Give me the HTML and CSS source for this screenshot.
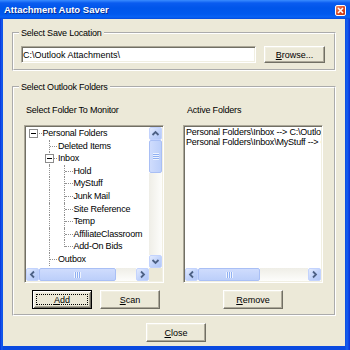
FILE: index.html
```
<!DOCTYPE html>
<html lang="en">
  <head>
    <meta charset="UTF-8" />
    <title>Attachment Auto Saver</title>
    <link rel="stylesheet" href="styles.css">
  </head>
  <body>
    <div class="window">
      <div class="titlebar">
        <span class="title">Attachment Auto Saver</span>
        <span class="close-x">
          <svg width="9" height="9" viewBox="0 0 9 9">
            <path d="M2 2 L7 7 M7 2 L2 7" stroke="#fff" stroke-width="1.6" />
          </svg>
        </span>
      </div>

      <div class="client">
        <fieldset class="group group-save">
          <legend>Select Save Location</legend>
          <div class="save-row">
            <input class="textbox" type="text" value="C:\Outlook Attachments\" />
            <button class="btn btn-browse"><u>B</u>rowse...</button>
          </div>
        </fieldset>

        <fieldset class="group group-folders">
          <legend>Select Outlook Folders</legend>
          <div class="folder-cols">
            <div class="col">
              <div class="col-label">Select Folder To Monitor</div>
              <div class="sunken list-box">
                <div class="tree">
                  <div class="row"><span class="c root"><span class="box"><i></i></span></span><span class="label">Personal Folders</span></div>
                  <div class="row"><span class="c"></span><span class="c tee"></span><span class="label">Deleted Items</span></div>
                  <div class="row"><span class="c"></span><span class="c tee"><span class="box"><i></i></span></span><span class="label">Inbox</span></div>
                  <div class="row"><span class="c"></span><span class="c pipe"></span><span class="c tee"></span><span class="label">Hold</span></div>
                  <div class="row"><span class="c"></span><span class="c pipe"></span><span class="c tee"></span><span class="label">MyStuff</span></div>
                  <div class="row"><span class="c"></span><span class="c pipe"></span><span class="c tee"></span><span class="label">Junk Mail</span></div>
                  <div class="row"><span class="c"></span><span class="c pipe"></span><span class="c tee"></span><span class="label">Site Reference</span></div>
                  <div class="row"><span class="c"></span><span class="c pipe"></span><span class="c tee"></span><span class="label">Temp</span></div>
                  <div class="row"><span class="c"></span><span class="c pipe"></span><span class="c tee"></span><span class="label">AffiliateClassroom</span></div>
                  <div class="row"><span class="c"></span><span class="c pipe"></span><span class="c elbow"></span><span class="label">Add-On Bids</span></div>
                  <div class="row"><span class="c"></span><span class="c tee"></span><span class="label">Outbox</span></div>
                </div>

                <div class="vscroll">
                  <span class="sb-btn">
                    <svg width="11" height="11" viewBox="0 0 11 11"><polyline points="2.5,7 5.5,4 8.5,7" fill="none" stroke="#4d6185" stroke-width="1.8" /></svg>
                  </span>
                  <span class="thumb thumb-v"><span class="grip"></span></span>
                  <span class="track track-v"></span>
                  <span class="sb-btn">
                    <svg width="11" height="11" viewBox="0 0 11 11"><polyline points="2.5,4 5.5,7 8.5,4" fill="none" stroke="#4d6185" stroke-width="1.8" /></svg>
                  </span>
                </div>

                <div class="hscroll">
                  <span class="sb-btn">
                    <svg width="11" height="11" viewBox="0 0 11 11"><polyline points="7,2.5 4,5.5 7,8.5" fill="none" stroke="#4d6185" stroke-width="1.8" /></svg>
                  </span>
                  <span class="thumb thumb-h tree-thumb"><span class="grip grip-h"></span></span>
                  <span class="track track-h"></span>
                  <span class="sb-btn">
                    <svg width="11" height="11" viewBox="0 0 11 11"><polyline points="4,2.5 7,5.5 4,8.5" fill="none" stroke="#4d6185" stroke-width="1.8" /></svg>
                  </span>
                </div>
                <div class="corner"></div>
              </div>
              <div class="btn-row btn-row-left">
                <button class="btn default"><span class="focus"><u>A</u>dd</span></button>
                <button class="btn"><u>S</u>can</button>
              </div>
            </div>

            <div class="col">
              <div class="col-label col-label-right">Active Folders</div>
              <div class="sunken list-box list-box-active">
                <div class="active-list">
                  <div class="item">Personal Folders\Inbox --&gt; C:\Outlook Attachments\Inbox\</div>
                  <div class="item">Personal Folders\Inbox\MyStuff --&gt; C:\Outlook Attachments\MyStuff\</div>
                </div>
                <div class="hscroll hscroll-wide">
                  <span class="sb-btn">
                    <svg width="11" height="11" viewBox="0 0 11 11"><polyline points="7,2.5 4,5.5 7,8.5" fill="none" stroke="#4d6185" stroke-width="1.8" /></svg>
                  </span>
                  <span class="thumb thumb-h active-thumb"><span class="grip grip-h"></span></span>
                  <span class="track track-h"></span>
                  <span class="sb-btn">
                    <svg width="11" height="11" viewBox="0 0 11 11"><polyline points="4,2.5 7,5.5 4,8.5" fill="none" stroke="#4d6185" stroke-width="1.8" /></svg>
                  </span>
                </div>
              </div>
              <div class="btn-row btn-row-center">
                <button class="btn"><u>R</u>emove</button>
              </div>
            </div>
          </div>
        </fieldset>

        <div class="footer">
          <button class="btn"><u>C</u>lose</button>
        </div>
      </div>
    </div>
  </body>
</html>
```

FILE: styles.css
```
* {
  box-sizing: border-box;
  margin: 0;
  padding: 0;
}

html,
body {
  width: 350px;
  height: 350px;
  overflow: hidden;
  font-family: "Liberation Sans", Arial, sans-serif;
  font-size: 9px;
  letter-spacing: -0.2px;
  color: #000;
}

.window {
  width: 350px;
  height: 350px;
  display: flex;
  flex-direction: column;
  background: linear-gradient(to right, #0831d9 0, #1660f0 2px, #0a4ae0 3px, #0a4ae0 345px, #1660f0 347px, #0831d9 350px);
}

.titlebar {
  height: 19px;
  flex: none;
  display: flex;
  align-items: center;
  padding: 0 4px 0 4px;
  background: linear-gradient(#3a8cff 0, #0a5cf0 3px, #0055ea 8px, #0058ee 14px, #0862f5 17px, #0449dc 19px);
}

.title {
  color: #fff;
  font-weight: bold;
  font-size: 9.5px;
  letter-spacing: 0;
  text-shadow: 1px 1px 0 #0b2a8c;
}

.close-x {
  margin-left: auto;
  margin-top: 1px;
  width: 11px;
  height: 11px;
  display: flex;
  align-items: center;
  justify-content: center;
  border: 1px solid #fff;
  border-radius: 2px;
  background: linear-gradient(135deg, #ec8a6a, #d8431c 60%, #c43a14);
}

.client {
  flex: 1;
  margin: 0 5px 4px 3px;
  background: #ece9d8;
  display: flex;
  flex-direction: column;
}

/* group boxes */

.group {
  min-width: 0;
  margin: 0 9px;
  border: 2px groove #fff;
}

.group legend {
  margin-left: 5px;
  padding: 0 2px;
  line-height: 10px;
}

.group-save {
  margin-top: 9px;
}

.group-folders {
  margin-top: 11px;
}

.save-row {
  display: flex;
  gap: 8px;
  padding: 8px 9px 6px 7px;
}

.textbox {
  width: 235px;
  height: 17px;
  padding: 0 1px;
  font: inherit;
  background: #fff;
  border: 1px solid;
  border-color: #aca899 #fff #fff #aca899;
  box-shadow: inset 1px 1px #716f64, inset -1px -1px #f1efe2;
  outline: none;
}

/* buttons */

.btn {
  font: inherit;
  color: #000;
  width: 60px;
  height: 19px;
  background: #ece9d8;
  border: 1px solid;
  border-color: #fff #716f64 #716f64 #fff;
  box-shadow: inset -1px -1px #aca899, inset 1px 1px #f1efe2;
  display: flex;
  align-items: center;
  justify-content: center;
}

.btn-browse {
  width: 61px;
  height: 17px;
}

.btn.default {
  border-color: #000;
  box-shadow: inset 1px 1px #fff, inset -1px -1px #716f64, inset 2px 2px #f1efe2, inset -2px -2px #aca899;
  padding: 2px;
}

.focus {
  flex: 1;
  align-self: stretch;
  margin: 1px;
  border: 1px dotted #000;
  display: flex;
  align-items: center;
  justify-content: center;
}

/* folder columns */

.folder-cols {
  display: flex;
  gap: 19px;
  padding: 13px 11px 5px 10px;
}

.col {
  width: 140px;
  display: flex;
  flex-direction: column;
}

.col-label {
  line-height: 10px;
  padding-left: 2px;
  margin-bottom: 10px;
}

.col-label-right {
  padding-left: 4px;
}

.sunken {
  border: 1px solid;
  border-color: #aca899 #fff #fff #aca899;
  padding: 1px;
  box-shadow: inset 1px 1px #716f64, inset -1px -1px #f1efe2;
  background: #fff;
}

.list-box {
  height: 158px;
  display: grid;
  grid-template-columns: 1fr 13px;
  grid-template-rows: 1fr 13px;
  overflow: hidden;
}

.list-box-active {
  grid-template-columns: 1fr;
}

.btn-row {
  display: flex;
  gap: 8px;
  margin-top: 7px;
}

.btn-row-left {
  padding-left: 8px;
}

.btn-row-center {
  justify-content: center;
}

.footer {
  display: flex;
  justify-content: center;
  padding-left: 4px;
  margin-top: 7px;
}

/* tree */

.tree {
  overflow: hidden;
  background: #fff;
}

.row {
  height: 12.6px;
  display: flex;
  white-space: nowrap;
}

.row .label {
  line-height: 12.6px;
  padding-left: 1px;
}

.c {
  width: 15.5px;
  flex: none;
  position: relative;
}

.pipe::before,
.tee::before,
.elbow::before {
  content: "";
  position: absolute;
  left: 7px;
  top: 0;
  bottom: 0;
  border-left: 1px dotted #919191;
}

.elbow::before {
  bottom: auto;
  height: 7px;
}

.tee::after,
.elbow::after,
.root::after {
  content: "";
  position: absolute;
  left: 8px;
  right: 0;
  top: 6px;
  border-top: 1px dotted #919191;
}

.box {
  position: absolute;
  z-index: 1;
  left: 3px;
  top: 2px;
  width: 9px;
  height: 9px;
  border: 1px solid #8c8c8c;
  background: #fff;
  display: flex;
  align-items: center;
  justify-content: center;
}

.box i {
  width: 5px;
  height: 1px;
  background: #000;
}

/* active list */

.active-list {
  background: #fff;
  overflow: hidden;
  padding-left: 1px;
}

.active-list .item {
  line-height: 10px;
  white-space: nowrap;
}

/* scrollbars */

.vscroll {
  display: flex;
  flex-direction: column;
}

.hscroll {
  display: flex;
}

.sb-btn {
  width: 13px;
  height: 13px;
  flex: none;
  display: flex;
  align-items: center;
  justify-content: center;
  border: 1px solid #c3d3fd;
  border-radius: 2px;
  background: linear-gradient(135deg, #e3ebfe, #c1d3fb 55%, #b2c7f7);
}

.thumb {
  flex: none;
  display: flex;
  align-items: center;
  justify-content: center;
  border: 1px solid #a9bff5;
  border-radius: 2px;
}

.thumb-v {
  height: 33px;
  background: linear-gradient(to right, #cfdcfd, #bccffa);
}

.thumb-h {
  background: linear-gradient(#cfdcfd, #bccffa);
}

.tree-thumb {
  width: 77px;
}

.active-thumb {
  width: 62px;
}

.grip {
  width: 6px;
  height: 7px;
  background: repeating-linear-gradient(#eef3fe 0 1px, #8fb0f3 1px 2px);
}

.grip-h {
  width: 7px;
  height: 6px;
  background: repeating-linear-gradient(to right, #eef3fe 0 1px, #8fb0f3 1px 2px);
}

.track {
  flex: 1;
}

.track-v {
  background: linear-gradient(to right, #efeee7, #fdfdfb);
}

.track-h {
  background: linear-gradient(#efeee7, #fdfdfb);
}

.corner {
  background: #ece9d8;
}
```
